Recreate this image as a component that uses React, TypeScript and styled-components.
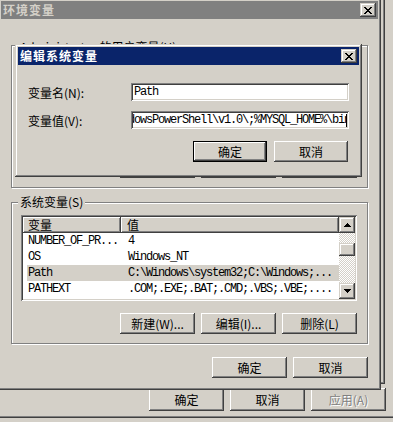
import styled, { createGlobalStyle } from 'styled-components'

const GlobalStyle = createGlobalStyle`
  html, body {
    margin: 0;
    padding: 0;
    background: #d4d0c8;
  }
  body {
    font-family: "Noto Sans CJK SC", "Liberation Sans", sans-serif;
    font-size: 12px;
    color: #000;
    overflow: hidden;
  }
  * {
    box-sizing: border-box;
  }
`

const mono = `"Liberation Mono", "Noto Sans CJK SC", monospace`

const Desktop = styled.div`
  position: relative;
  width: 393px;
  height: 422px;
  overflow: hidden;
  background: #d4d0c8;
`

const SysWindow = styled.div`
  height: 418px;
  display: flex;
  flex-direction: column;
  box-shadow: inset 0 -1px #404040, inset 0 -2px #808080;
`

const TabPanel = styled.div`
  width: 385px;
  height: 384px;
  flex-shrink: 0;
  box-shadow: inset -1px -1px #404040, inset -2px -2px #808080;
`

const ButtonRow = styled.div<{ $gap: number; $pad?: string; $top?: string }>`
  display: flex;
  justify-content: flex-end;
  gap: ${p => p.$gap}px;
  padding: ${p => p.$pad ?? '0'};
  margin-top: ${p => p.$top ?? '0'};
`

const Button = styled.button<{ $w: number; $h: number; $default?: boolean }>`
  width: ${p => p.$w}px;
  height: ${p => p.$h}px;
  flex-shrink: 0;
  margin: 0;
  padding: 0;
  background: #d4d0c8;
  font: 12px "Noto Sans CJK SC", "Liberation Sans", sans-serif;
  color: #000;
  border: ${p => (p.$default ? '1px solid #000' : 'none')};
  box-shadow: inset -1px -1px #404040, inset 1px 1px #fff, inset -2px -2px #808080;
  &:disabled {
    color: #808080;
    text-shadow: 1px 1px 0 #fff;
  }
`

const Window = styled.div<{ $left: number; $top: number; $w: number; $h: number }>`
  position: absolute;
  left: ${p => p.$left}px;
  top: ${p => p.$top}px;
  width: ${p => p.$w}px;
  height: ${p => p.$h}px;
  padding: 3px;
  display: flex;
  flex-direction: column;
  background: #d4d0c8;
  box-shadow: inset -1px -1px #404040, inset 1px 1px #d4d0c8, inset -2px -2px #808080,
    inset 2px 2px #fff;
`

const TitleBar = styled.div<{ $active?: boolean }>`
  height: 18px;
  flex-shrink: 0;
  display: flex;
  align-items: center;
  justify-content: space-between;
  padding: 0 2px;
  background: ${p => (p.$active ? '#0a246a' : '#808080')};
  color: ${p => (p.$active ? '#fff' : '#d4d0c8')};
`

const TitleText = styled.span`
  font-weight: bold;
  font-size: 12px;
  letter-spacing: 1px;
  line-height: 18px;
`

const Raised3D = styled.div<{ $w: number; $h: number }>`
  width: ${p => p.$w}px;
  height: ${p => p.$h}px;
  flex-shrink: 0;
  display: flex;
  align-items: center;
  justify-content: center;
  background: #d4d0c8;
  box-shadow: inset -1px -1px #404040, inset 1px 1px #d4d0c8, inset -2px -2px #808080,
    inset 2px 2px #fff;
`

const EnvBody = styled.div`
  flex: 1;
  display: flex;
  flex-direction: column;
  padding: 26px 10px 0 10px;
`

const Group = styled.div<{ $h: number; $top?: number }>`
  position: relative;
  height: ${p => p.$h}px;
  margin-top: ${p => p.$top ?? 0}px;
  flex-shrink: 0;
  display: flex;
  flex-direction: column;
  padding: 12px 10px 9px 9px;
  border: 1px solid #808080;
  box-shadow: 1px 1px 0 #fff, inset 1px 1px 0 #fff;
`

const GroupLabel = styled.span<{ $dy?: number }>`
  position: absolute;
  top: ${p => -8 + (p.$dy ?? 0)}px;
  left: 6px;
  padding: 0 2px;
  background: #d4d0c8;
  line-height: 14px;
  white-space: nowrap;
`

const ListBox = styled.div`
  width: 336px;
  height: 86px;
  flex-shrink: 0;
  display: flex;
  padding: 2px;
  background: #fff;
  box-shadow: inset 1px 1px #808080, inset -1px -1px #fff, inset 2px 2px #404040,
    inset -2px -2px #d4d0c8;
`

const ListMain = styled.div`
  flex: 1;
  display: flex;
  flex-direction: column;
  overflow: hidden;
`

const Header = styled.div`
  display: grid;
  grid-template-columns: 98px 1fr;
  height: 16px;
  flex-shrink: 0;
`

const HeaderCell = styled.div<{ $pad: number }>`
  padding-left: ${p => p.$pad}px;
  line-height: 16px;
  background: #d4d0c8;
  box-shadow: inset -1px -1px #404040, inset 1px 1px #fff, inset -2px -2px #808080;
`

const Row = styled.div<{ $selected?: boolean }>`
  display: grid;
  grid-template-columns: 93px 1fr;
  height: 16px;
  flex-shrink: 0;
  margin-left: 4px;
  background: ${p => (p.$selected ? '#d4d0c8' : 'transparent')};
  font-family: ${mono};
  font-size: 12px;
  letter-spacing: -1.2px;
  line-height: 16px;
  white-space: nowrap;
`

const Cell = styled.span<{ $pad: number }>`
  padding-left: ${p => p.$pad}px;
  overflow: hidden;
`

const ScrollBar = styled.div`
  width: 16px;
  flex-shrink: 0;
  display: flex;
  flex-direction: column;
`

const Track = styled.div`
  flex: 1;
  background-color: #fff;
  background-image: conic-gradient(#d4d0c8 25%, #fff 0 50%, #d4d0c8 0 75%, #fff 0);
  background-size: 2px 2px;
  padding-top: 10px;
`

const EditBody = styled.div`
  flex: 1;
  padding: 18px 10px 0 10px;
  display: flex;
  flex-direction: column;
`

const FieldRow = styled.div`
  display: flex;
  align-items: center;
  height: 18px;
  & + & {
    margin-top: 10px;
  }
`

const FieldLabel = styled.span`
  width: 103px;
  flex-shrink: 0;
  white-space: nowrap;
`

const Field = styled.div`
  width: 218px;
  height: 18px;
  padding: 2px;
  background: #fff;
  box-shadow: inset 1px 1px #808080, inset -1px -1px #fff, inset 2px 2px #404040,
    inset -2px -2px #d4d0c8;
`

const FieldInner = styled.div<{ $end?: boolean }>`
  height: 100%;
  display: flex;
  align-items: center;
  justify-content: ${p => (p.$end ? 'flex-end' : 'flex-start')};
  overflow: hidden;
  padding-left: 1px;
  font-family: ${mono};
  font-size: 12px;
  letter-spacing: -1.2px;
  white-space: nowrap;
`

const FieldText = styled.span<{ $tail?: number }>`
  flex-shrink: 0;
  margin-right: ${p => -(p.$tail ?? 0)}px;
`

const Caret = styled.span`
  width: 1px;
  height: 13px;
  flex-shrink: 0;
  background: #000;
`

function CloseGlyph() {
  return (
    <svg width="8" height="7" viewBox="0 0 8 7" shapeRendering="crispEdges">
      <path
        fill="#000"
        d="M0 0h2v1H0zM6 0h2v1H6zM1 1h2v1H1zM5 1h2v1H5zM2 2h4v1H2zM3 3h2v1H3zM2 4h4v1H2zM1 5h2v1H1zM5 5h2v1H5zM0 6h2v1H0zM6 6h2v1H6z"
      />
    </svg>
  )
}

function Arrow({ down }: { down?: boolean }) {
  return (
    <svg
      width="7"
      height="4"
      viewBox="0 0 7 4"
      shapeRendering="crispEdges"
      style={down ? { transform: 'scaleY(-1)' } : undefined}
    >
      <path fill="#000" d="M3 0h1v1H3zM2 1h3v1H2zM1 2h5v1H1zM0 3h7v1H0z" />
    </svg>
  )
}

type Item = { name: string; value: string; selected?: boolean }

const systemVars: Item[] = [
  { name: 'NUMBER_OF_PR...', value: '4' },
  { name: 'OS', value: 'Windows_NT' },
  { name: 'Path', value: 'C:\\Windows\\system32;C:\\Windows;...', selected: true },
  { name: 'PATHEXT', value: '.COM;.EXE;.BAT;.CMD;.VBS;.VBE;....' },
]

function ListView({ items }: { items: Item[] }) {
  return (
    <ListBox>
      <ListMain>
        <Header>
          <HeaderCell $pad={5}>变量</HeaderCell>
          <HeaderCell $pad={6}>值</HeaderCell>
        </Header>
        {items.map(it => (
          <Row key={it.name} $selected={it.selected}>
            <Cell $pad={1}>{it.name}</Cell>
            <Cell $pad={8}>{it.value}</Cell>
          </Row>
        ))}
      </ListMain>
      <ScrollBar>
        <Raised3D $w={16} $h={16}>
          <Arrow />
        </Raised3D>
        <Track>
          <Raised3D $w={16} $h={13} />
        </Track>
        <Raised3D $w={16} $h={16}>
          <Arrow down />
        </Raised3D>
      </ScrollBar>
    </ListBox>
  )
}

// the user-variable group sits behind the edit dialog: only its frame edges show
function HiddenButtons() {
  return (
    <ButtonRow $gap={6} $top="auto">
      <Button $w={75} $h={21} aria-label="新建(N)..." />
      <Button $w={75} $h={21} aria-label="编辑(E)..." />
      <Button $w={75} $h={21} aria-label="删除(D)" />
    </ButtonRow>
  )
}

export default function App() {
  return (
    <>
      <GlobalStyle />
      <Desktop>
        <SysWindow>
          <TabPanel />
          <ButtonRow $gap={6} $pad="0 7px 0 0" $top="4px">
            <Button $w={75} $h={23}>确定</Button>
            <Button $w={75} $h={23}>取消</Button>
            <Button $w={75} $h={23} disabled>
              应用(A)
            </Button>
          </ButtonRow>
        </SysWindow>

        <Window $left={-2} $top={-2} $w={383} $h={392}>
          <TitleBar>
            <TitleText>环境变量</TitleText>
            <Raised3D $w={16} $h={14}>
              <CloseGlyph />
            </Raised3D>
          </TitleBar>
          <EnvBody>
            <Group $h={143}>
              <GroupLabel $dy={2}>Administrator 的用户变量(U)</GroupLabel>
              <ListBox />
              <HiddenButtons />
            </Group>
            <Group $h={142} $top={14}>
              <GroupLabel>系统变量(S)</GroupLabel>
              <ListView items={systemVars} />
              <ButtonRow $gap={6} $top="auto">
                <Button $w={75} $h={21}>新建(W)...</Button>
                <Button $w={75} $h={21}>编辑(I)...</Button>
                <Button $w={75} $h={21}>删除(L)</Button>
              </ButtonRow>
            </Group>
            <ButtonRow $gap={6} $top="13px">
              <Button $w={75} $h={21}>确定</Button>
              <Button $w={75} $h={21}>取消</Button>
            </ButtonRow>
          </EnvBody>
        </Window>

        <Window $left={15} $top={44} $w={347} $h={133}>
          <TitleBar $active>
            <TitleText>编辑系统变量</TitleText>
            <Raised3D $w={16} $h={14}>
              <CloseGlyph />
            </Raised3D>
          </TitleBar>
          <EditBody>
            <FieldRow>
              <FieldLabel>变量名(N):</FieldLabel>
              <Field>
                <FieldInner>Path</FieldInner>
              </Field>
            </FieldRow>
            <FieldRow>
              <FieldLabel>变量值(V):</FieldLabel>
              <Field>
                <FieldInner $end>
                  <FieldText $tail={4}>
                    %SystemRoot%\system32\WindowsPowerShell\v1.0\;%MYSQL_HOME%\bin
                  </FieldText>
                  <Caret />
                </FieldInner>
              </Field>
            </FieldRow>
            <ButtonRow $gap={7} $pad="0 1px 0 0" $top="12px">
              <Button $w={74} $h={21} $default>
                确定
              </Button>
              <Button $w={74} $h={21}>取消</Button>
            </ButtonRow>
          </EditBody>
        </Window>
      </Desktop>
    </>
  )
}
